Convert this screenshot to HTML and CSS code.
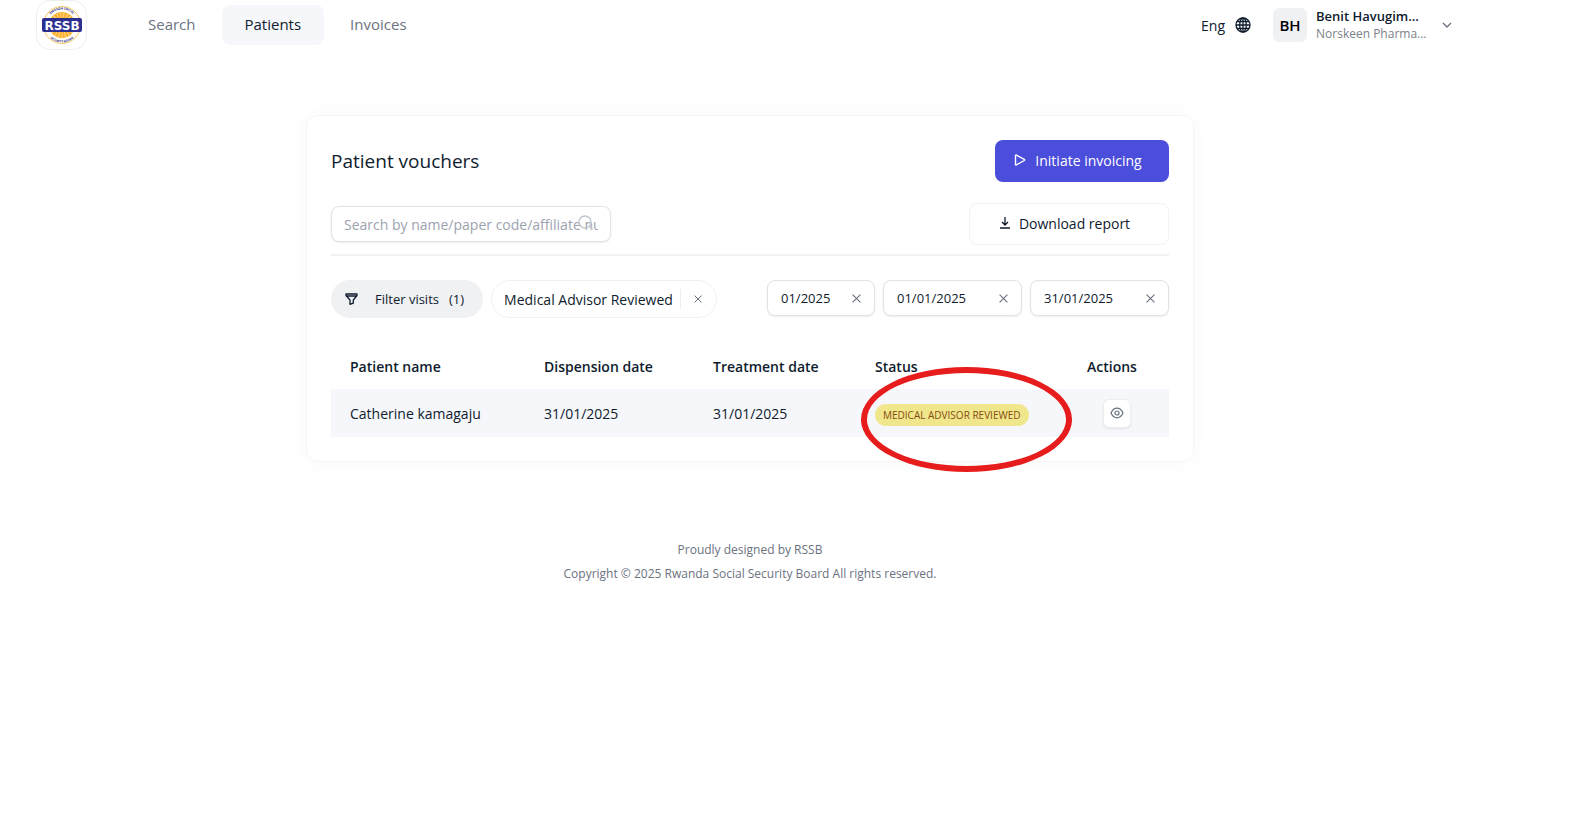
FILE: index.html
```
<!DOCTYPE html>
<html lang="en">
  <head>
    <meta charset="UTF-8" />
    <meta name="viewport" content="width=device-width, initial-scale=1.0" />
    <title>Patient vouchers</title>
    <link rel="stylesheet" href="styles.css">
  </head>
  <body>
    <header class="header">
      <a class="logo" href="#" aria-label="RSSB">
        <svg width="42" height="42" viewBox="0 0 42 42">
          <defs>
            <path id="arc-top" d="M5.500 21a15.500 15.500 0 0 1 31 0" />
            <path id="arc-bottom" d="M3.500 21a17.500 17.500 0 0 0 35 0" />
          </defs>
          <circle cx="21" cy="21" r="18.500" fill="#fffdf6" stroke="#f3c766" stroke-width="1" />
          <circle cx="21" cy="21" r="13" fill="#fbb02c" />
          <circle cx="21" cy="21" r="10" fill="none" stroke="#fdd48a" stroke-width="5" stroke-dasharray="1 2" />
          <text class="logo-ring"><textPath href="#arc-top" startOffset="50%">RWANDA SOCIAL</textPath></text>
          <text class="logo-ring"><textPath href="#arc-bottom" startOffset="50%">SECURITY BOARD</textPath></text>
          <rect x="1" y="14" width="40" height="14" rx="2" fill="#2b2f8f" />
          <text class="logo-name" x="21" y="25.500">RSSB</text>
        </svg>
      </a>
      <nav class="nav">
        <a class="nav-link" href="#">Search</a>
        <a class="nav-link active" href="#">Patients</a>
        <a class="nav-link" href="#">Invoices</a>
      </nav>
      <div class="header-right">
        <button class="lang">
          Eng
          <svg width="16" height="16" viewBox="0 0 16 16" fill="none" stroke="#0f1c2e" stroke-width="1.300">
            <circle cx="8" cy="8" r="7" />
            <ellipse cx="8" cy="8" rx="3.300" ry="7" />
            <path d="M8 1v14M1 8h14M2 4.500h12M2 11.500h12" />
          </svg>
        </button>
        <button class="user">
          <span class="avatar">BH</span>
          <span class="user-info">
            <span class="user-name">Benit Havugim...</span>
            <span class="user-org">Norskeen Pharma...</span>
          </span>
          <svg width="10" height="6" viewBox="0 0 10 6" fill="none" stroke="#6b7280" stroke-width="1.300">
            <path d="M1 1l4 4 4-4" />
          </svg>
        </button>
      </div>
    </header>

    <main class="card">
      <div class="card-top">
        <h1 class="title">Patient vouchers</h1>
        <button class="btn btn-primary">
          <svg width="12" height="12" viewBox="0 0 12 12" fill="none" stroke="#fff" stroke-width="1.400" stroke-linejoin="round">
            <path d="M1.500 1.500q0-.8.8-.5l8 4.300q.8.600 0 1.200l-8 4.500q-.8.300-.8-.5z" />
          </svg>
          Initiate invoicing
        </button>
      </div>

      <div class="card-search">
        <label class="search">
          <input class="field search-input" type="text" aria-label="Search patients" placeholder="Search by name/paper code/affiliate number" />
          <svg class="search-icon" width="16" height="16" viewBox="0 0 16 16" fill="none" stroke="#c3c7ce" stroke-width="1.400">
            <circle cx="7" cy="7" r="6" />
            <path d="M11.500 11.500l3 3" />
          </svg>
        </label>
        <button class="btn btn-outline">
          <svg width="10" height="12" viewBox="0 0 10 12" fill="none" stroke="#0f1c2e" stroke-width="1.300">
            <path d="M5 0v8M2 5l3 3 3-3M0 11h10" />
          </svg>
          Download report
        </button>
      </div>

      <div class="filters">
        <button class="filter-btn">
          <svg width="13" height="12" viewBox="0 0 13 12" fill="none" stroke="#0f1c2e" stroke-width="1.300" stroke-linejoin="round">
            <path d="M1 1h11v1.500L8.300 7v3.200L5 11.300V7L1 2.500zM1.300 3h10.400" />
          </svg>
          <span>Filter visits</span>
          <span>(1)</span>
        </button>
        <div class="chip">
          <span>Medical Advisor Reviewed</span>
          <button class="clear chip-clear" aria-label="Remove filter">
            <svg width="8" height="8" viewBox="0 0 8 8"><path d="M.5.5l7 7M7.500.5l-7 7" /></svg>
          </button>
        </div>
        <div class="dates">
          <div class="field date date-month">
            <input type="text" aria-label="Month" value="01/2025" />
            <button class="clear" aria-label="Clear month">
              <svg width="9" height="9" viewBox="0 0 8 8"><path d="M.5.5l7 7M7.500.5l-7 7" /></svg>
            </button>
          </div>
          <div class="field date">
            <input type="text" aria-label="Start date" value="01/01/2025" />
            <button class="clear" aria-label="Clear start date">
              <svg width="9" height="9" viewBox="0 0 8 8"><path d="M.5.5l7 7M7.500.5l-7 7" /></svg>
            </button>
          </div>
          <div class="field date">
            <input type="text" aria-label="End date" value="31/01/2025" />
            <button class="clear" aria-label="Clear end date">
              <svg width="9" height="9" viewBox="0 0 8 8"><path d="M.5.5l7 7M7.500.5l-7 7" /></svg>
            </button>
          </div>
        </div>
      </div>

      <table class="table">
        <thead>
          <tr>
            <th class="col-name">Patient name</th>
            <th class="col-dispension">Dispension date</th>
            <th class="col-treatment">Treatment date</th>
            <th class="col-status">Status</th>
            <th>Actions</th>
          </tr>
        </thead>
        <tbody>
          <tr>
            <td>Catherine kamagaju</td>
            <td>31/01/2025</td>
            <td>31/01/2025</td>
            <td class="status">
              <span class="badge">MEDICAL ADVISOR REVIEWED</span>
              <span class="highlight"></span>
            </td>
            <td class="actions">
              <button class="view" aria-label="View">
                <svg width="14" height="12" viewBox="0 0 14 12" fill="none" stroke="#64707d" stroke-width="1.200">
                  <path d="M1 6q2.200-4.800 6-4.800T13 6q-2.200 4.800-6 4.800T1 6z" />
                  <circle cx="7" cy="6" r="2" />
                </svg>
              </button>
            </td>
          </tr>
        </tbody>
      </table>
    </main>

    <footer class="footer">
      <p>Proudly designed by RSSB</p>
      <p>Copyright © 2025 Rwanda Social Security Board All rights reserved.</p>
    </footer>
  </body>
</html>
```
FILE: styles.css
```
* {
  box-sizing: border-box;
}

body {
  margin: 0;
  padding-right: 82px;
  font-family: "Open Sans", "Noto Sans", sans-serif;
  font-size: 14px;
  color: #0f1c2e;
  background-color: #fff;
}

button,
input {
  font: inherit;
  color: inherit;
}

button {
  padding: 0;
  border: none;
  background: none;
  cursor: pointer;
}

svg {
  display: block;
  flex-shrink: 0;
}

/* header */
.header {
  display: flex;
  align-items: center;
  height: 50px;
  padding: 0 48px 0 36px;
}

.logo {
  display: flex;
  align-items: center;
  justify-content: center;
  width: 51px;
  height: 50px;
  border: 1px solid #eceff1;
  border-radius: 14px;
}

.logo-ring {
  font-size: 3px;
  font-weight: 700;
  fill: #2b2f8f;
  text-anchor: middle;
}

.logo-name {
  font-family: "DejaVu Sans", sans-serif;
  font-size: 12px;
  font-weight: 700;
  fill: #fff;
  text-anchor: middle;
}

.nav {
  display: flex;
  gap: 3px;
  margin-left: 38px;
}

.nav-link {
  padding: 0 23px 2px;
  border-radius: 8px;
  font-size: 15px;
  line-height: 38px;
  color: #6b7280;
  text-decoration: none;
}

.nav-link.active {
  color: #0f1c2e;
  background-color: #f6f7fa;
}

.header-right {
  display: flex;
  align-items: center;
  gap: 22px;
  margin-left: auto;
}

.lang {
  display: flex;
  align-items: center;
  gap: 10px;
}

.user {
  display: flex;
  align-items: center;
  text-align: left;
}

.avatar {
  width: 34px;
  margin-right: 9px;
  border-radius: 6px;
  font-size: 15px;
  font-weight: 600;
  line-height: 34px;
  text-align: center;
  color: #000;
  background-color: #f0f1f3;
}

.user-info {
  display: flex;
  flex-direction: column;
  width: 126px;
  line-height: 18px;
}

.user-name {
  font-size: 13px;
  font-weight: 600;
}

.user-org {
  font-size: 12px;
  color: #7b818a;
}

/* card */
.card {
  max-width: 888px;
  margin: 65px auto 0;
  padding: 24px;
  border: 1px solid #f5f5f6;
  border-radius: 12px;
  box-shadow: 0 0 20px rgba(0, 0, 0, 0.03);
}

.card-top,
.card-search {
  display: flex;
  align-items: center;
  justify-content: space-between;
}

.title {
  margin: 0;
  font-size: 19px;
  font-weight: 400;
}

.btn {
  display: flex;
  align-items: center;
  justify-content: center;
  gap: 9px;
  height: 42px;
  padding: 0 8px 2px 0;
  border-radius: 8px;
}

.btn-primary {
  width: 174px;
  color: #fff;
  background-color: #4b4ddb;
}

.btn-outline {
  width: 200px;
  border: 1px solid #f1f2f4;
}

.card-search {
  padding: 21px 0 9px;
  border-bottom: 2px solid #f1f2f3;
}

.search {
  position: relative;
}

.field {
  height: 36px;
  border: 1px solid #e0e2ea;
  border-radius: 8px;
  background-color: #fff;
  box-shadow: 0 1px 2px rgba(0, 0, 0, 0.08);
}

.search-input {
  display: block;
  width: 280px;
  padding: 0 12px;
}

.search-input::placeholder {
  color: #9ca3af;
}

.search-icon {
  position: absolute;
  top: 9px;
  right: 17px;
}

.filters {
  display: flex;
  align-items: flex-start;
  gap: 8px;
  margin-top: 24px;
  font-size: 13px;
}

.filter-btn,
.chip {
  display: flex;
  align-items: center;
  height: 38px;
  border-radius: 20px;
}

.filter-btn {
  gap: 10px;
  padding: 0 19px 0 14px;
  background-color: #f0f1f3;
}

.filter-btn svg {
  margin-right: 7px;
}

.chip {
  padding: 0 14px 0 12px;
  border: 1px solid #eff0f2;
  font-size: 14px;
}

.clear path {
  stroke: #6b7280;
}

.chip-clear {
  margin-left: 7px;
  padding: 6px 0 6px 13px;
  border-left: 1px solid #eceef0;
}

.dates {
  display: flex;
  gap: 8px;
  margin-left: auto;
}

.date {
  display: flex;
  align-items: center;
  width: 139px;
  padding: 0 13px;
}

.date-month {
  width: 108px;
}

.date input {
  flex: 1;
  min-width: 0;
  padding: 0;
  border: none;
  background: none;
}

/* table */
.table {
  width: 100%;
  margin-top: 27px;
  border-collapse: collapse;
  table-layout: fixed;
  text-align: left;
}

.table th,
.table td {
  padding: 0 19px;
}

.table th {
  height: 44px;
  padding-bottom: 2px;
  font-weight: 600;
}

.table td {
  height: 48px;
  background-color: #f6f7fa;
}

.col-name {
  width: 194px;
}

.col-dispension {
  width: 169px;
}

.col-treatment {
  width: 162px;
}

.col-status {
  width: 212px;
}

.table .status {
  position: relative;
  padding-top: 4px;
}

.badge {
  display: inline-block;
  padding: 0 8px;
  border-radius: 11px;
  font-size: 10px;
  line-height: 22px;
  white-space: nowrap;
  color: #854d0e;
  background-color: #f0e68c;
}

.highlight {
  position: absolute;
  top: -22px;
  left: 5px;
  width: 211px;
  height: 105px;
  border: 6px solid #e71d1d;
  border-radius: 50%;
  pointer-events: none;
}

.view {
  display: flex;
  align-items: center;
  justify-content: center;
  width: 28px;
  height: 29px;
  margin-left: 16px;
  border: 1px solid #eceef1;
  border-radius: 6px;
  background-color: #fff;
  box-shadow: 0 1px 2px rgba(0, 0, 0, 0.08);
}

/* footer */
.footer {
  margin-top: 76px;
  font-size: 12px;
  line-height: 24px;
  text-align: center;
  color: #6b7280;
}

.footer p {
  margin: 0;
}
```
